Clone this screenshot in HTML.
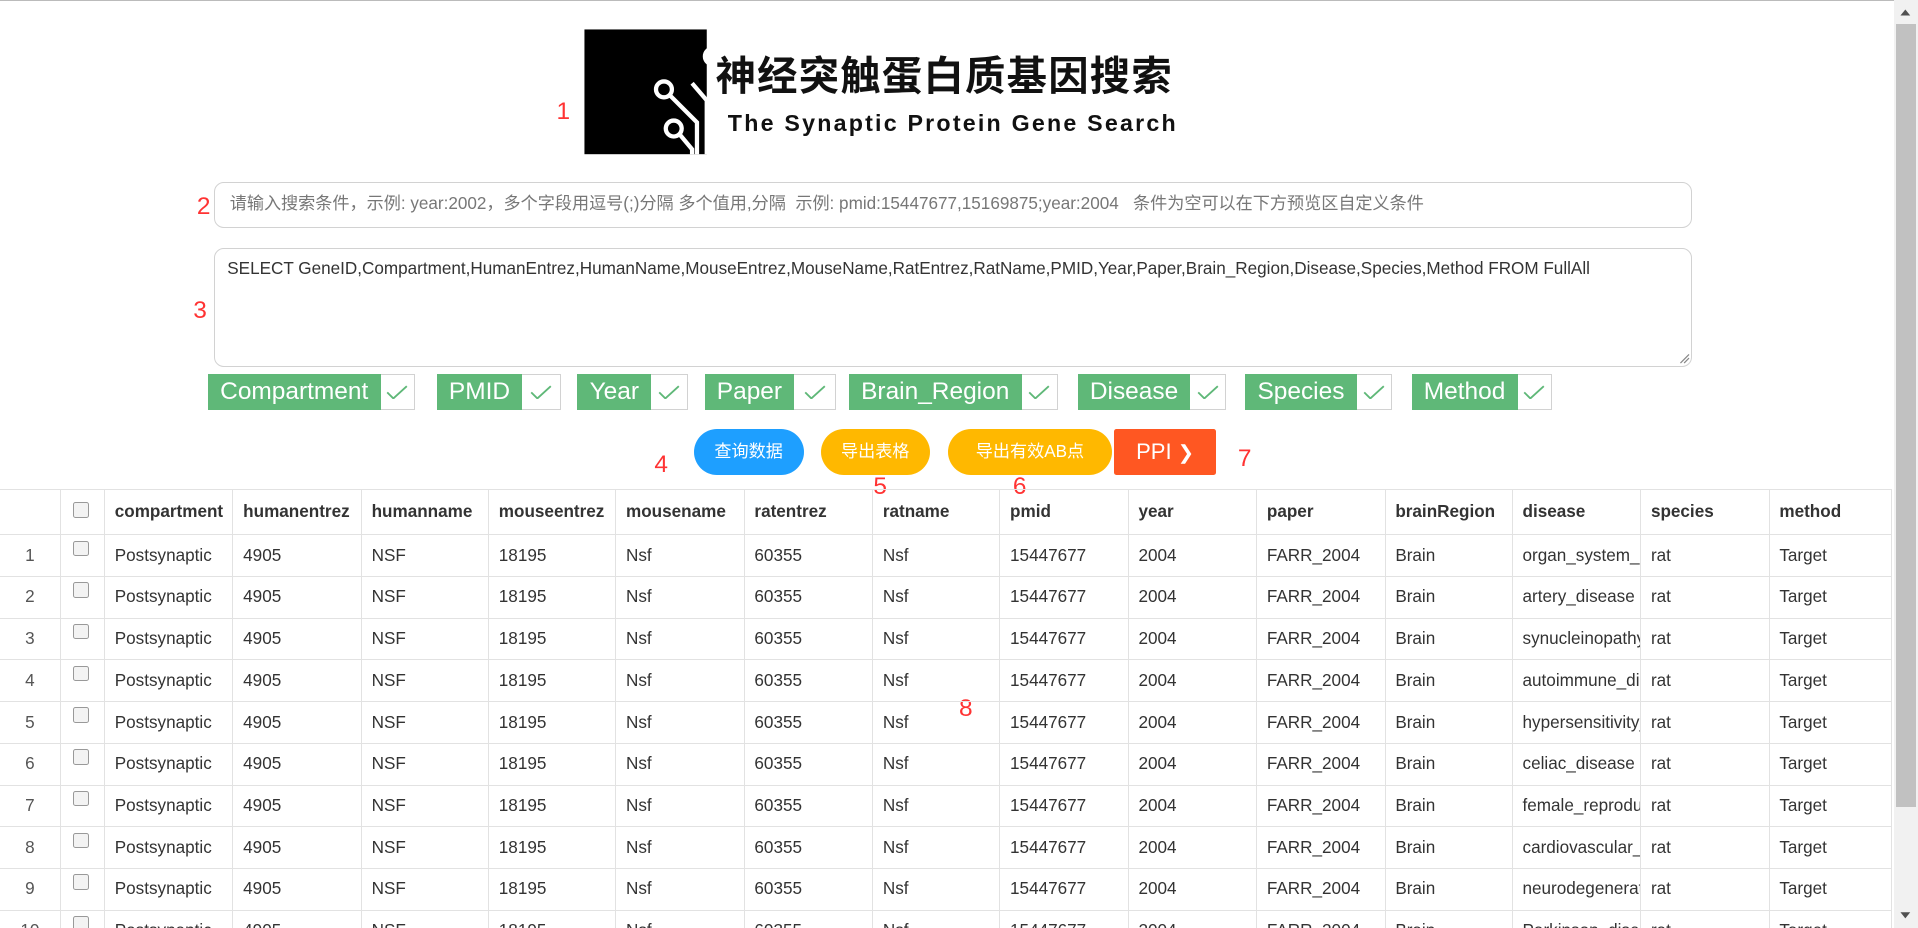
<!DOCTYPE html>
<html><head><meta charset="utf-8"><style>
html,body{margin:0;padding:0;background:#fff;overflow:hidden}
body{width:1568px;height:759px;zoom:1.22321;position:relative;font-family:"Liberation Sans","Noto Sans CJK SC",sans-serif;color:#333}
.a{position:absolute}
.red{color:#f33;font-size:20px;position:absolute}
.inp{position:absolute;left:175px;width:1208px;border:1px solid #d2d2d2;border-radius:8px;box-sizing:border-box}
.tag{position:absolute;top:306px;height:29px;display:flex}
.tag .g{background:#5fb878;color:#fff;font-size:20px;line-height:29px;padding:0 10px}
.tag .c{width:28px;border:1px solid #d2d2d2;box-sizing:border-box;border-left:none;display:flex;align-items:center;justify-content:center}
.btn{position:absolute;top:351px;height:37px;border-radius:19px;color:#fff;font-size:14px;line-height:37px;text-align:center}
table{position:absolute;left:-1px;top:400px;border-collapse:collapse;font-size:14px;table-layout:fixed;width:1547px}
td,th{border:1px solid #e2e2e2;height:33.3px;padding:0 0 0 8px;text-align:left;white-space:nowrap;overflow:hidden;color:#333}
th{height:36px;font-weight:bold}
td:first-child{text-align:center;padding:0;color:#555}
.cb{width:11px;height:11px;border:1px solid #999;border-radius:2px;background:#f3f3f3;display:inline-block;margin-left:1px;vertical-align:0px}
td .cb{position:relative;top:-4px}
</style></head><body>
<div class="a" style="left:0;top:0;width:1568px;height:1px;background:#bbb"></div>
<svg class="a" style="left:476px;top:22px" width="112" height="108" viewBox="476 22 112 108">
<rect x="478" y="24" width="100" height="102" fill="#000"/>
<g stroke="#fff" stroke-width="3.5" fill="none">
<circle cx="543" cy="73" r="6.5"/><circle cx="551" cy="105" r="6.5"/><circle cx="583" cy="46" r="6.5"/>
<path d="M548 78 L570 100 L570 126"/><path d="M556 110 L566 122 L566 126"/><path d="M566 68 L578 82 L578 126"/>
</g></svg>
<div class="a" style="left:585px;top:38px;font-size:33px;font-weight:bold;color:#111;letter-spacing:1px;font-family:'Noto Sans CJK SC',sans-serif;line-height:44px">神经突触蛋白质基因搜索</div>
<div class="a" style="left:595px;top:90px;font-size:19px;font-weight:bold;color:#111;letter-spacing:1.8px">The Synaptic Protein Gene Search</div>
<div class="red" style="left:455px;top:80px">1</div>
<div class="red" style="left:161px;top:158px">2</div>
<div class="red" style="left:158px;top:243px">3</div>
<div class="red" style="left:535px;top:369px">4</div>
<div class="red" style="left:714px;top:387px">5</div>
<div class="red" style="left:828px;top:387px">6</div>
<div class="red" style="left:1012px;top:364px">7</div>
<div class="red" style="left:784px;top:568px">8</div>
<div class="inp" style="top:149px;height:37px;line-height:35px;padding-left:12px;font-size:14px;color:#777">请输入搜索条件，示例: year:2002，多个字段用逗号(;)分隔 多个值用,分隔&nbsp; 示例: pmid:15447677,15169875;year:2004&nbsp;&nbsp; 条件为空可以在下方预览区自定义条件</div>
<div class="inp" style="top:203px;height:97px;padding:8px 10px;font-size:14px;color:#333">SELECT GeneID,Compartment,HumanEntrez,HumanName,MouseEntrez,MouseName,RatEntrez,RatName,PMID,Year,Paper,Brain_Region,Disease,Species,Method FROM FullAll</div>
<svg class="a" style="left:1372px;top:288px" width="10" height="10"><path d="M9 2L2 9M9 5L5 9" stroke="#888"/></svg>
<div class="tag" style="left:170px"><div class="g">Compartment</div><div class="c"><svg width="18" height="12"><path d="M1 6L6 11L17 1" stroke="#5fb878" stroke-width="1.5" fill="none"/></svg></div></div>
<div class="tag" style="left:357px"><div class="g">PMID</div><div class="c" style="width:32px"><svg width="18" height="12"><path d="M1 6L6 11L17 1" stroke="#5fb878" stroke-width="1.5" fill="none"/></svg></div></div>
<div class="tag" style="left:472px"><div class="g">Year</div><div class="c" style="width:30px"><svg width="18" height="12"><path d="M1 6L6 11L17 1" stroke="#5fb878" stroke-width="1.5" fill="none"/></svg></div></div>
<div class="tag" style="left:576px"><div class="g">Paper</div><div class="c" style="width:34px"><svg width="18" height="12"><path d="M1 6L6 11L17 1" stroke="#5fb878" stroke-width="1.5" fill="none"/></svg></div></div>
<div class="tag" style="left:694px"><div class="g">Brain_Region</div><div class="c" style="width:30px"><svg width="18" height="12"><path d="M1 6L6 11L17 1" stroke="#5fb878" stroke-width="1.5" fill="none"/></svg></div></div>
<div class="tag" style="left:881px"><div class="g">Disease</div><div class="c" style="width:29px"><svg width="18" height="12"><path d="M1 6L6 11L17 1" stroke="#5fb878" stroke-width="1.5" fill="none"/></svg></div></div>
<div class="tag" style="left:1018px"><div class="g">Species</div><div class="c" style="width:29px"><svg width="18" height="12"><path d="M1 6L6 11L17 1" stroke="#5fb878" stroke-width="1.5" fill="none"/></svg></div></div>
<div class="tag" style="left:1154px"><div class="g">Method</div><div class="c" style="width:28px"><svg width="18" height="12"><path d="M1 6L6 11L17 1" stroke="#5fb878" stroke-width="1.5" fill="none"/></svg></div></div>
<div class="btn" style="left:567px;width:90px;background:#1e9fff">查询数据</div>
<div class="btn" style="left:671px;width:89px;background:#ffb800">导出表格</div>
<div class="btn" style="left:775px;width:134px;background:#ffb800">导出有效AB点</div>
<div class="btn" style="left:911px;width:83px;background:#ff5722;border-radius:2px;font-size:18px">PPI <span style="font-size:16px">&#10095;</span></div>
<table>
<colgroup><col style="width:50px"><col style="width:36px"><col style="width:105px"><col style="width:105px"><col style="width:104px"><col style="width:104px"><col style="width:105px"><col style="width:105px"><col style="width:104px"><col style="width:105px"><col style="width:105px"><col style="width:105px"><col style="width:104px"><col style="width:105px"><col style="width:105px"><col style="width:100px"></colgroup>
<tr><th></th><th style="padding-left:9px"><span class="cb"></span></th><th>compartment</th><th>humanentrez</th><th>humanname</th><th>mouseentrez</th><th>mousename</th><th>ratentrez</th><th>ratname</th><th>pmid</th><th>year</th><th>paper</th><th>brainRegion</th><th>disease</th><th>species</th><th>method</th></tr>
<tr><td>1</td><td style="padding-left:9px"><span class="cb"></span></td><td>Postsynaptic</td><td>4905</td><td>NSF</td><td>18195</td><td>Nsf</td><td>60355</td><td>Nsf</td><td>15447677</td><td>2004</td><td>FARR_2004</td><td>Brain</td><td>organ_system_disease</td><td>rat</td><td>Target</td></tr>
<tr><td>2</td><td style="padding-left:9px"><span class="cb"></span></td><td>Postsynaptic</td><td>4905</td><td>NSF</td><td>18195</td><td>Nsf</td><td>60355</td><td>Nsf</td><td>15447677</td><td>2004</td><td>FARR_2004</td><td>Brain</td><td>artery_disease</td><td>rat</td><td>Target</td></tr>
<tr><td>3</td><td style="padding-left:9px"><span class="cb"></span></td><td>Postsynaptic</td><td>4905</td><td>NSF</td><td>18195</td><td>Nsf</td><td>60355</td><td>Nsf</td><td>15447677</td><td>2004</td><td>FARR_2004</td><td>Brain</td><td>synucleinopathy</td><td>rat</td><td>Target</td></tr>
<tr><td>4</td><td style="padding-left:9px"><span class="cb"></span></td><td>Postsynaptic</td><td>4905</td><td>NSF</td><td>18195</td><td>Nsf</td><td>60355</td><td>Nsf</td><td>15447677</td><td>2004</td><td>FARR_2004</td><td>Brain</td><td>autoimmune_disease</td><td>rat</td><td>Target</td></tr>
<tr><td>5</td><td style="padding-left:9px"><span class="cb"></span></td><td>Postsynaptic</td><td>4905</td><td>NSF</td><td>18195</td><td>Nsf</td><td>60355</td><td>Nsf</td><td>15447677</td><td>2004</td><td>FARR_2004</td><td>Brain</td><td>hypersensitivity_reaction</td><td>rat</td><td>Target</td></tr>
<tr><td>6</td><td style="padding-left:9px"><span class="cb"></span></td><td>Postsynaptic</td><td>4905</td><td>NSF</td><td>18195</td><td>Nsf</td><td>60355</td><td>Nsf</td><td>15447677</td><td>2004</td><td>FARR_2004</td><td>Brain</td><td>celiac_disease</td><td>rat</td><td>Target</td></tr>
<tr><td>7</td><td style="padding-left:9px"><span class="cb"></span></td><td>Postsynaptic</td><td>4905</td><td>NSF</td><td>18195</td><td>Nsf</td><td>60355</td><td>Nsf</td><td>15447677</td><td>2004</td><td>FARR_2004</td><td>Brain</td><td>female_reproductive</td><td>rat</td><td>Target</td></tr>
<tr><td>8</td><td style="padding-left:9px"><span class="cb"></span></td><td>Postsynaptic</td><td>4905</td><td>NSF</td><td>18195</td><td>Nsf</td><td>60355</td><td>Nsf</td><td>15447677</td><td>2004</td><td>FARR_2004</td><td>Brain</td><td>cardiovascular_disease</td><td>rat</td><td>Target</td></tr>
<tr><td>9</td><td style="padding-left:9px"><span class="cb"></span></td><td>Postsynaptic</td><td>4905</td><td>NSF</td><td>18195</td><td>Nsf</td><td>60355</td><td>Nsf</td><td>15447677</td><td>2004</td><td>FARR_2004</td><td>Brain</td><td>neurodegenerative</td><td>rat</td><td>Target</td></tr>
<tr><td>10</td><td style="padding-left:9px"><span class="cb"></span></td><td>Postsynaptic</td><td>4905</td><td>NSF</td><td>18195</td><td>Nsf</td><td>60355</td><td>Nsf</td><td>15447677</td><td>2004</td><td>FARR_2004</td><td>Brain</td><td>Parkinson_disease</td><td>rat</td><td>Target</td></tr>
</table>
<div class="a" style="left:1548px;top:0;width:20px;height:759px;background:#f1f1f1"></div>
<div class="a" style="left:1550px;top:20px;width:16px;height:640px;background:#c1c1c1"></div>
<svg class="a" style="left:1552px;top:6px" width="12" height="8"><path d="M2 7L6 2L10 7Z" fill="#505050"/></svg>
<svg class="a" style="left:1552px;top:745px" width="12" height="8"><path d="M2 1L6 6L10 1Z" fill="#505050"/></svg>
</body></html>
